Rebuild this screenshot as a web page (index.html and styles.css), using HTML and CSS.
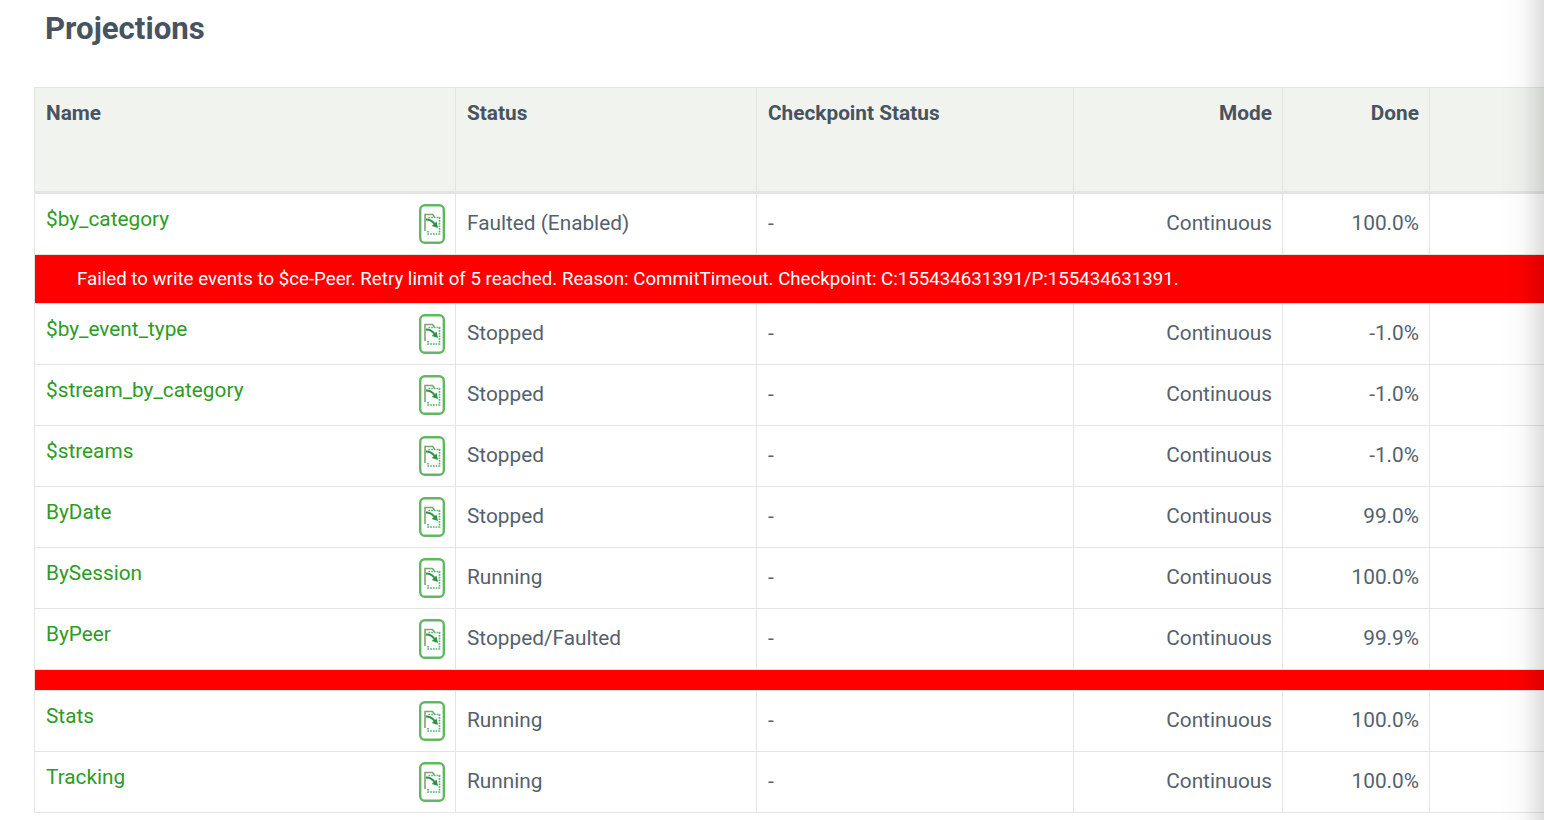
FILE: index.html
```html
<!DOCTYPE html>
<html lang="en">
<head>
<meta charset="utf-8">
<title>Projections</title>
<link rel="stylesheet" href="styles.css">
</head>
<body>
<svg class="defs" width="0" height="0" aria-hidden="true">
  <symbol id="doc" viewBox="0 0 26 40">
    <rect x="1.200" y="1.200" width="23.600" height="37.600" rx="4.500" fill="#fff" stroke="#62b862" stroke-width="2.400"/>
    <path d="M6 27V10.500H13.500L15.500 13" fill="none" stroke="#7fa36f" stroke-width="1.600"/>
    <path d="M9.500 13.500H20.500V30H9V27" fill="none" stroke="#52b078" stroke-width="1.700" stroke-dasharray="1.700 1"/>
    <path d="M7 15.500C10.500 15.500 13.500 17 15.500 20" fill="none" stroke="#2b9444" stroke-width="2"/>
    <path d="M19 24L12.800 22L17.500 17.500Z" fill="#2b9444"/>
  </symbol>
</svg>
<h1 class="title">Projections</h1>
<table class="grid">
  <colgroup>
    <col class="c-name"><col class="c-status"><col class="c-check"><col class="c-mode"><col class="c-done"><col class="c-rest">
  </colgroup>
  <thead>
    <tr><th>Name</th><th>Status</th><th>Checkpoint Status</th><th class="r">Mode</th><th class="r">Done</th><th></th></tr>
  </thead>
  <tbody>
    <tr class="first"><td><div class="name"><a href="#">$by_category</a><svg class="ic"><use href="#doc"/></svg></div></td><td>Faulted (Enabled)</td><td>-</td><td class="r">Continuous</td><td class="r">100.0%</td><td></td></tr>
    <tr class="err"><td colspan="6"><span>Failed to write events to $ce-Peer. Retry limit of 5 reached. Reason: CommitTimeout. Checkpoint: C:155434631391/P:155434631391.</span></td></tr>
    <tr><td><div class="name"><a href="#">$by_event_type</a><svg class="ic"><use href="#doc"/></svg></div></td><td>Stopped</td><td>-</td><td class="r">Continuous</td><td class="r">-1.0%</td><td></td></tr>
    <tr><td><div class="name"><a href="#">$stream_by_category</a><svg class="ic"><use href="#doc"/></svg></div></td><td>Stopped</td><td>-</td><td class="r">Continuous</td><td class="r">-1.0%</td><td></td></tr>
    <tr><td><div class="name"><a href="#">$streams</a><svg class="ic"><use href="#doc"/></svg></div></td><td>Stopped</td><td>-</td><td class="r">Continuous</td><td class="r">-1.0%</td><td></td></tr>
    <tr><td><div class="name"><a href="#">ByDate</a><svg class="ic"><use href="#doc"/></svg></div></td><td>Stopped</td><td>-</td><td class="r">Continuous</td><td class="r">99.0%</td><td></td></tr>
    <tr><td><div class="name"><a href="#">BySession</a><svg class="ic"><use href="#doc"/></svg></div></td><td>Running</td><td>-</td><td class="r">Continuous</td><td class="r">100.0%</td><td></td></tr>
    <tr><td><div class="name"><a href="#">ByPeer</a><svg class="ic"><use href="#doc"/></svg></div></td><td>Stopped/Faulted</td><td>-</td><td class="r">Continuous</td><td class="r">99.9%</td><td></td></tr>
    <tr class="err empty"><td colspan="6"></td></tr>
    <tr><td><div class="name"><a href="#">Stats</a><svg class="ic"><use href="#doc"/></svg></div></td><td>Running</td><td>-</td><td class="r">Continuous</td><td class="r">100.0%</td><td></td></tr>
    <tr><td><div class="name"><a href="#">Tracking</a><svg class="ic"><use href="#doc"/></svg></div></td><td>Running</td><td>-</td><td class="r">Continuous</td><td class="r">100.0%</td><td></td></tr>
  </tbody>
</table>
<div class="edge"></div>
</body>
</html>
```
FILE: styles.css
```css
* { box-sizing: border-box; }
html, body { margin: 0; height: 820px; overflow: hidden; background: #fff; }
body {
  font-family: Roboto, "Liberation Sans", sans-serif;
  font-size: 20.8px;
  color: #55616d;
  padding: 0 0 0 34px;
  width: 1700px;
}
.defs { position: absolute; }
.title {
  margin: 0;
  padding: 10px 0 0 11px;
  height: 87px;
  font-size: 31.2px;
  line-height: 38px;
  font-weight: 700;
  color: #47535f;
}
.grid {
  border-collapse: collapse;
  table-layout: fixed;
  width: 1566px;
}
.c-name { width: 421px; }
.c-status { width: 301px; }
.c-check { width: 317px; }
.c-mode { width: 209px; }
.c-done { width: 147px; }
.c-rest { width: 171px; }
th, td {
  border: 1px solid #e3e5e2;
  padding: 0 10px 0 11px;
  text-align: left;
  vertical-align: top;
}
thead tr { height: 105px; }
th {
  background: #f1f3ef;
  padding-top: 12px;
  font-size: 20.8px;
  line-height: 27px;
  font-weight: 700;
  color: #47535f;
  border-bottom: 3px solid #e3e5e2;
}
tbody tr { height: 61px; }
tbody tr.first { height: 62px; }
tbody td { padding-top: 14px; line-height: 30px; }
tbody td:first-child { padding-top: 10px; }
.r { text-align: right; }
.name {
  display: flex;
  justify-content: space-between;
  align-items: flex-start;
  height: 40px;
}
.name a {
  color: #2c9c24;
  text-decoration: none;
  line-height: 30px;
}
.ic { width: 26px; height: 40px; flex: none; }
tr.err { height: 49px; }
tbody .err td {
  background: #ff0000;
  color: #fff;
  padding: 9px 0 0 42px;
  font-size: 18.7px;
  line-height: 30px;
}
tr.err.empty { height: 21px; }
tbody .err.empty td { padding: 0; line-height: 0; }
.edge {
  position: fixed;
  top: 0;
  right: 0;
  width: 44px;
  height: 820px;
  background: linear-gradient(to right, rgba(0,0,0,0), rgba(0,0,0,0.02) 50%, rgba(0,0,0,0.13));
}
```
